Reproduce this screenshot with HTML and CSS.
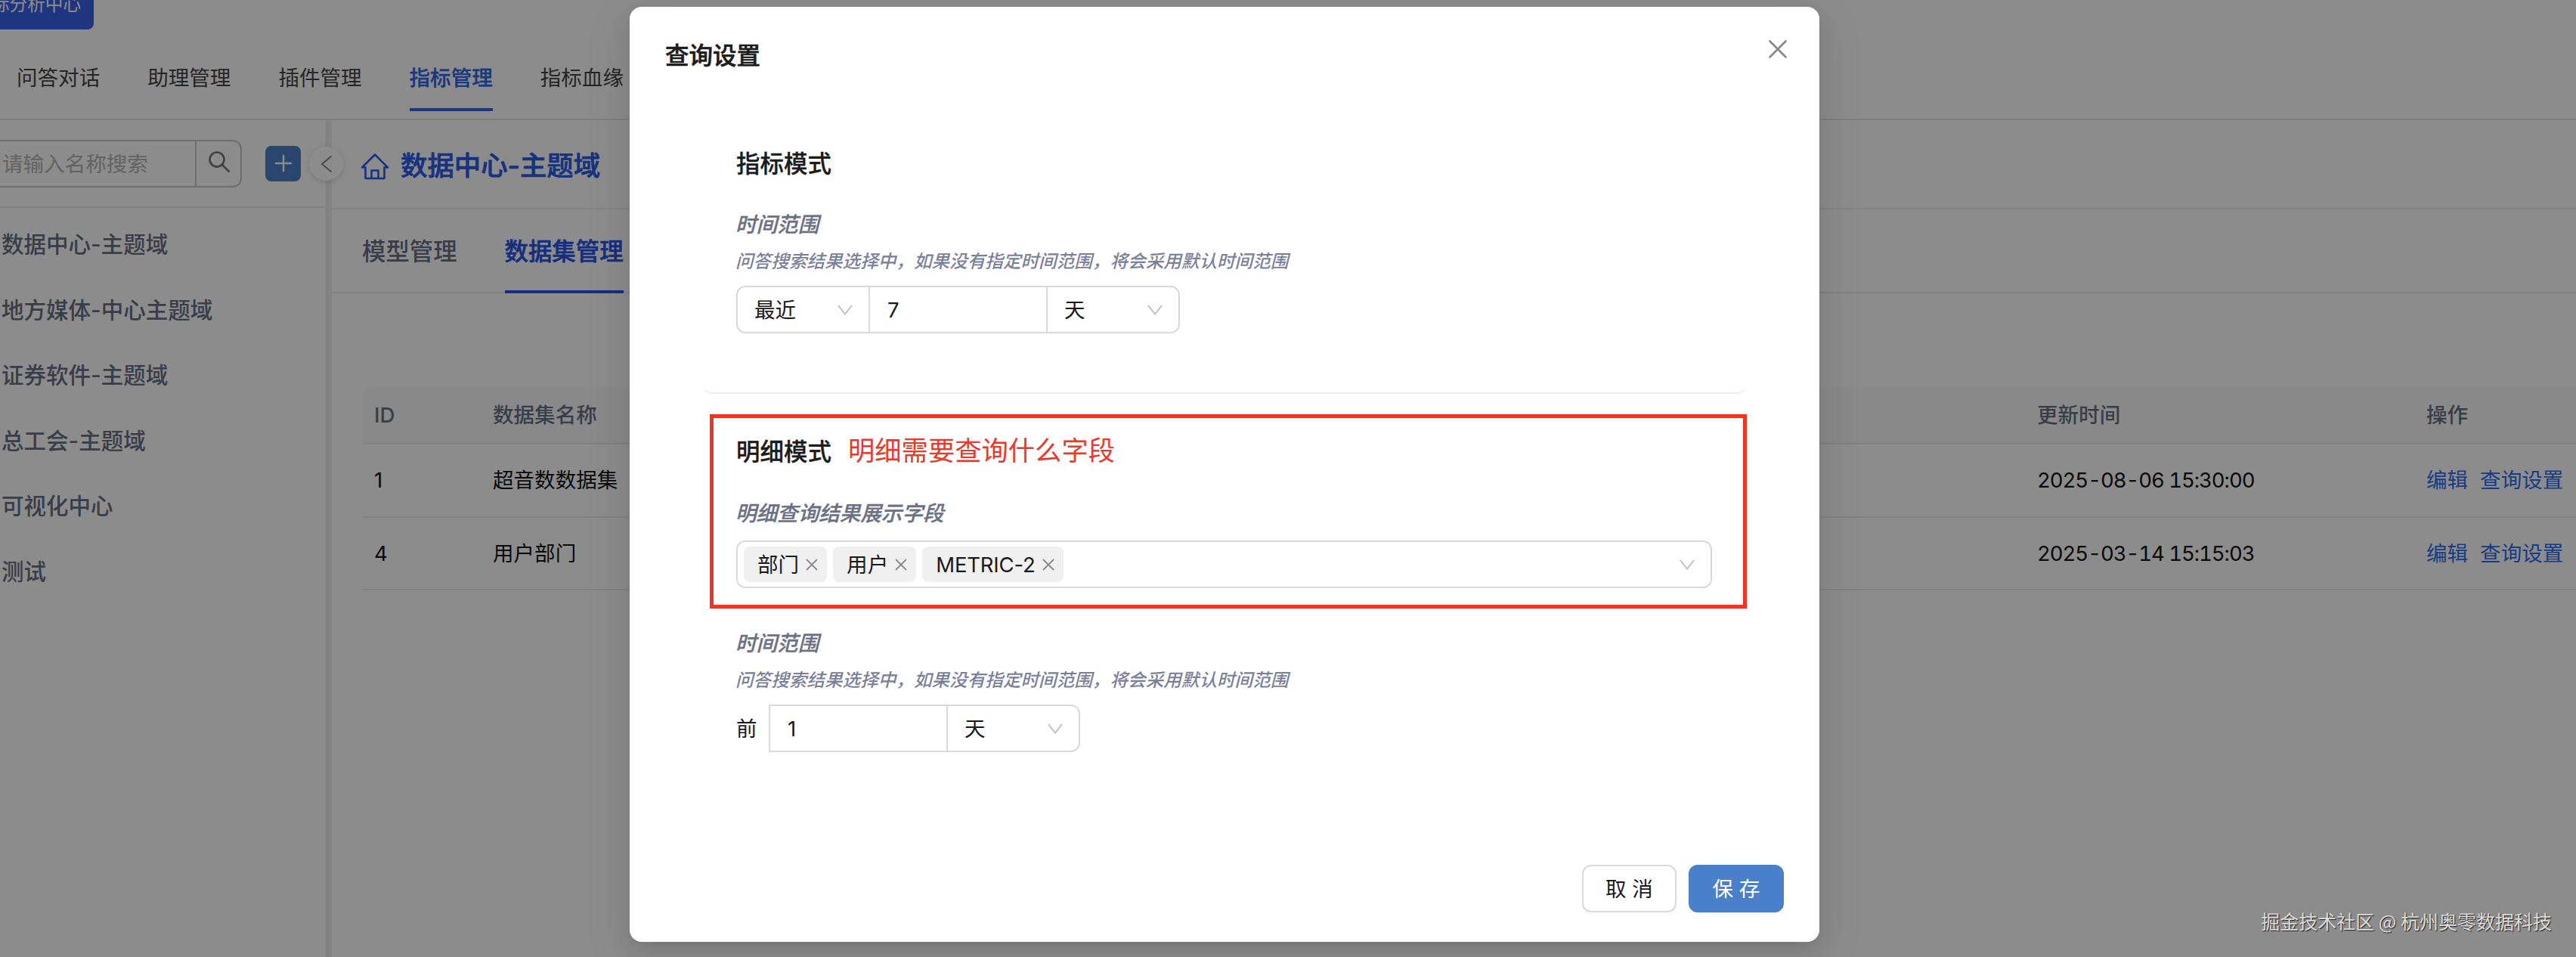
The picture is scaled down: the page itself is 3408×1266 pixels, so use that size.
FILE: index.html
```html
<!DOCTYPE html>
<html lang="zh-CN">
<head>
<meta charset="utf-8">
<title>查询设置</title>
<link rel="stylesheet" href="styles.css">
</head>
<body>
<div class="app">
  <div class="topbar"><div class="brand">指标分析中心</div></div>
  <nav class="nav">
    <a class="nav-item">问答对话</a>
    <a class="nav-item">助理管理</a>
    <a class="nav-item">插件管理</a>
    <a class="nav-item active">指标管理</a>
    <a class="nav-item">指标血缘</a>
  </nav>
  <div class="body">
    <aside class="sidebar">
      <div class="search-row">
        <div class="search">
          <span class="search-input">请输入名称搜索</span>
          <span class="search-btn"><svg width="30" height="30" viewBox="0 0 30 30" fill="none" stroke="currentColor" stroke-width="2.600"><circle cx="12" cy="12" r="9.500"/><path d="M18.500 18.500 28.500 28.500"/></svg></span>
        </div>
        <span class="add"><svg width="24" height="24" viewBox="0 0 24 24" fill="none" stroke="#fff" stroke-width="2.400"><path d="M12 1v22M1 12h22"/></svg></span>
      </div>
      <ul class="domains">
        <li>数据中心-主题域</li>
        <li>地方媒体-中心主题域</li>
        <li>证券软件-主题域</li>
        <li>总工会-主题域</li>
        <li>可视化中心</li>
        <li>测试</li>
      </ul>
    </aside>
    <div class="splitter"><span class="collapse"><svg width="16" height="24" viewBox="0 0 16 24" fill="none" stroke="currentColor" stroke-width="2"><path d="M14.500 1.500 2 12l12.500 10.500"/></svg></span></div>
    <main class="main">
      <header class="title">
        <svg width="38" height="36" viewBox="0 0 38 36" fill="none" stroke="currentColor" stroke-width="2.600" stroke-linejoin="round"><path d="M2 19.500 19 2.500l17 17h-4.500V34h-25V19.500z"/><path d="M14.500 34V23.500h9V34"/></svg>
        <span>数据中心-主题域</span>
      </header>
      <div class="tabs">
        <span class="tab">模型管理</span>
        <span class="tab active">数据集管理</span>
      </div>
      <div class="table">
        <div class="row head"><span>ID</span><span>数据集名称</span><span>更新时间</span><span>操作</span></div>
        <div class="row"><span>1</span><span>超音数数据集</span><span class="date">2025-08-06 15:30:00</span><span class="links"><a>编辑</a><a>查询设置</a></span></div>
        <div class="row"><span>4</span><span>用户部门</span><span class="date">2025-03-14 15:15:03</span><span class="links"><a>编辑</a><a>查询设置</a></span></div>
      </div>
    </main>
  </div>
</div>

<div class="mask">
  <div class="modal">
    <header class="modal-head">
      <h1>查询设置</h1>
      <svg class="close" width="26" height="26" viewBox="0 0 26 26" fill="none" stroke="#888" stroke-width="2.800" stroke-linecap="round"><path d="M2.500 2.500l21 21M23.500 2.500l-21 21"/></svg>
    </header>
    <section class="card metric">
      <h2>指标模式</h2>
      <div class="label">时间范围</div>
      <div class="hint">问答搜索结果选择中，如果没有指定时间范围，将会采用默认时间范围</div>
      <div class="field">
        <div class="group round">
          <div class="cell select first"><span>最近</span><svg class="arrow" viewBox="0 0 20 14"><path d="M1 1l9 11.500L19 1"/></svg></div>
          <div class="cell number">7</div>
          <div class="cell select"><span>天</span><svg class="arrow" viewBox="0 0 20 14"><path d="M1 1l9 11.500L19 1"/></svg></div>
        </div>
      </div>
    </section>
    <section class="card detail">
      <div class="frame"></div>
      <div class="heading"><h2>明细模式</h2><span class="note">明细需要查询什么字段</span></div>
      <div class="label">明细查询结果展示字段</div>
      <div class="multi">
        <span class="tag">部门<svg viewBox="0 0 16 16"><path d="M1 1l14 14M15 1L1 15"/></svg></span>
        <span class="tag">用户<svg viewBox="0 0 16 16"><path d="M1 1l14 14M15 1L1 15"/></svg></span>
        <span class="tag latin">METRIC-2<svg viewBox="0 0 16 16"><path d="M1 1l14 14M15 1L1 15"/></svg></span>
        <svg class="arrow" viewBox="0 0 20 14"><path d="M1 1l9 11.500L19 1"/></svg>
      </div>
      <div class="label second">时间范围</div>
      <div class="hint">问答搜索结果选择中，如果没有指定时间范围，将会采用默认时间范围</div>
      <div class="field">
        <span class="before">前</span>
        <div class="group">
          <div class="cell number">1</div>
          <div class="cell select"><span>天</span><svg class="arrow" viewBox="0 0 20 14"><path d="M1 1l9 11.500L19 1"/></svg></div>
        </div>
      </div>
    </section>
    <footer class="actions">
      <button class="btn">取 消</button>
      <button class="btn primary">保 存</button>
    </footer>
  </div>
</div>
<div class="watermark">掘金技术社区 @ 杭州奥零数据科技</div>
</body>
</html>
```

FILE: styles.css
```css
* { box-sizing: border-box; }
body {
  margin: 0;
  width: 3408px;
  height: 1266px;
  overflow: hidden;
  position: relative;
  background: #fff;
  font: 27.55px/44px Inter, "Noto Sans CJK SC", sans-serif;
  color: #1a1a1a;
}
svg { display: block; flex: none; }
h1, h2, ul { margin: 0; padding: 0; }

.app { display: flex; flex-direction: column; height: 1266px; }
.topbar { height: 49px; display: flex; }
.brand {
  width: 124px; height: 39px; padding-right: 17px;
  display: flex; justify-content: flex-end; align-items: flex-start;
  border-radius: 0 0 8px 0; background: #3a62e8; color: #fff;
  font-size: 23.6px; line-height: 12px; white-space: nowrap; overflow: hidden;
}
.nav {
  height: 110px; padding-left: 22px; display: flex; gap: 63px;
  border-bottom: 2px solid #e6e6e6; color: #444;
}
.nav-item { height: 98px; line-height: 109px; width: 110.200px; white-space: nowrap; }
.nav-item.active { color: #2e66e8; border-bottom: 4px solid #2e66e8; font-weight: 500; -webkit-text-stroke: 0.300px; }

.body { flex: 1; display: flex; }
.sidebar { width: 430px; }
.search-row {
  height: 116px; display: flex; align-items: center; gap: 31px;
  border-bottom: 2px solid #ececec;
}
.search {
  width: 320px; height: 63px; display: flex;
  border: 2px solid #c9c9c9; border-left: 0; border-radius: 0 12px 12px 0;
}
.search-input { width: 260px; padding-left: 3px; line-height: 60px; color: #b4b4b4; border-right: 2px solid #c9c9c9; }
.search-btn { flex: 1; display: flex; align-items: center; justify-content: center; padding: 0 0 5px 2px; color: #777; }
.add {
  width: 47px; height: 47px; border-radius: 8px; background: #4a80c9;
  display: flex; align-items: center; justify-content: center;
}
.domains { list-style: none; padding-top: 5px; }
.domains li { height: 86.600px; padding-left: 2px; line-height: 86px; font-size: 29.5px; font-weight: 500; color: #667085; }
.splitter { width: 9px; background: #eee; position: relative; border-radius: 8px 8px 0 0; }
.collapse {
  position: absolute; left: -21px; top: 35px; width: 45px; height: 45px;
  display: flex; align-items: center; justify-content: center;
  border-radius: 50%; background: #fff; color: #888; box-shadow: 0 2px 8px rgba(0,0,0,.15);
}

.main { flex: 1; }
.title {
  height: 118px; padding: 6px 0 0 38px; display: flex; align-items: center; gap: 15px;
  border-bottom: 2px solid #ececec; color: #2a5ce8; font-size: 35.4px; font-weight: 500;
}
.title span { -webkit-text-stroke: 0.700px; }
.tabs { height: 111px; padding-left: 40px; display: flex; gap: 63px; border-bottom: 2px solid #ececec; font-size: 31.4px; font-weight: 500; color: #667085; }
.tab { height: 111px; line-height: 113px; }
.tab.active { color: #2a55e5; border-bottom: 4px solid #2a55e5; -webkit-text-stroke: 0.600px; }
.table { margin: 124px 0 0 41px; }
.row { height: 96.500px; display: grid; grid-template-columns: 157px 2043px 515px 1fr; align-items: center; padding-left: 15px; border-bottom: 2px solid #e9e9e9; white-space: nowrap; color: #111; }
.row.head { height: 76px; background: #fafafa; font-weight: 500; color: #667085; border-radius: 12px 0 0 0; }
.date { font-variant-numeric: tabular-nums; letter-spacing: -1.080px; }
.links { display: flex; gap: 16px; color: #2a6cf0; }

.mask { position: absolute; inset: 0; background: rgba(0,0,0,.45); }
.modal {
  position: absolute; left: 833px; top: 9px; width: 1574px; height: 1237px;
  display: flex; flex-direction: column;
  background: #fff; border-radius: 16px;
  box-shadow: 0 12px 32px rgba(0,0,0,.08), 0 6px 12px -8px rgba(0,0,0,.12), 0 18px 56px 16px rgba(0,0,0,.05);
}
.modal-head { height: 159px; padding: 43px 42px 0 47px; display: flex; justify-content: space-between; align-items: flex-start; }
h1 { font-size: 31.5px; line-height: 44px; font-weight: 500; -webkit-text-stroke: 0.600px; color: #1c1c1c; }
.close { margin-top: -0.500px; }
.card { margin: 0 97px; padding: 0 44px; position: relative; }
.metric { height: 353px; padding-top: 27px; border-bottom: 2px solid #ececec; border-radius: 12px; }
h2 { font-size: 31.5px; line-height: 44px; font-weight: 500; -webkit-text-stroke: 0.300px; color: #1c1c1c; }
.label { font-style: italic; font-weight: 500; -webkit-text-stroke: 0.300px; color: #6b7085; margin-left: -1px; }
.hint { font-size: 23.600px; line-height: 40px; font-style: italic; font-weight: 500; color: #7b809a; white-space: nowrap; margin-left: -1px; }
.metric .label { margin-top: 36px; }
.label + .hint { margin-top: 7px; }
.field { display: flex; align-items: center; margin-top: 12px; }
.before { width: 43px; }
.group { display: flex; height: 63px; border: 2px solid #d9d9d9; border-radius: 0 12px 12px 0; }
.group.round { border-radius: 12px; }
.cell { display: flex; align-items: center; }
.number { width: 235px; padding-left: 23px; border-right: 2px solid #d9d9d9; }
.select { width: 173px; padding: 0 21px 0 22px; justify-content: space-between; }
.select.first { border-right: 2px solid #d9d9d9; width: 175px; }
.arrow { width: 20px; height: 14px; fill: none; stroke: #bfbfbf; stroke-width: 2; }

.detail { flex: 1; padding-top: 55px; }
.frame { position: absolute; left: 9px; top: 27px; width: 1372px; height: 257px; border: 5px solid #ee3524; }
.heading { display: flex; align-items: center; gap: 22px; }
.note { font-size: 35.300px; color: #e8392a; position: relative; top: -1px; }
.heading + .label { margin-top: 37px; }
.multi { margin-top: 14px; width: 1291px; height: 63px; padding: 0 21px 0 8px; display: flex; align-items: center; gap: 8px; border: 2px solid #d9d9d9; border-radius: 12px; }
.multi .arrow { margin-left: auto; }
.tag { height: 47px; padding: 0 12px 0 18px; display: flex; align-items: center; gap: 9px; background: #f0f0f0; border-radius: 8px; }
.tag.latin { letter-spacing: -0.200px; }
.tag svg { width: 16px; height: 16px; fill: none; stroke: #888; stroke-width: 1.800; }
.label.second { margin-top: 51px; }

.actions { height: 102px; padding: 0 47px; display: flex; justify-content: flex-end; gap: 16px; }
.btn {
  width: 125px; height: 63px; padding: 0; border: 2px solid #d9d9d9; border-radius: 12px; background: #fff;
  font: inherit; line-height: 58px; color: #1a1a1a; box-shadow: 0 4px 0 rgba(0,0,0,.015);
}
.btn.primary { width: 126px; border-color: #4a80c9; background: #4a80c9; color: #fff; }
.watermark {
  position: absolute; right: 32px; bottom: 28px; font: 25px/40px "Noto Sans CJK SC", sans-serif;
  color: #dcdcdc; text-shadow: 1px 1px 1px #222;
}
```
